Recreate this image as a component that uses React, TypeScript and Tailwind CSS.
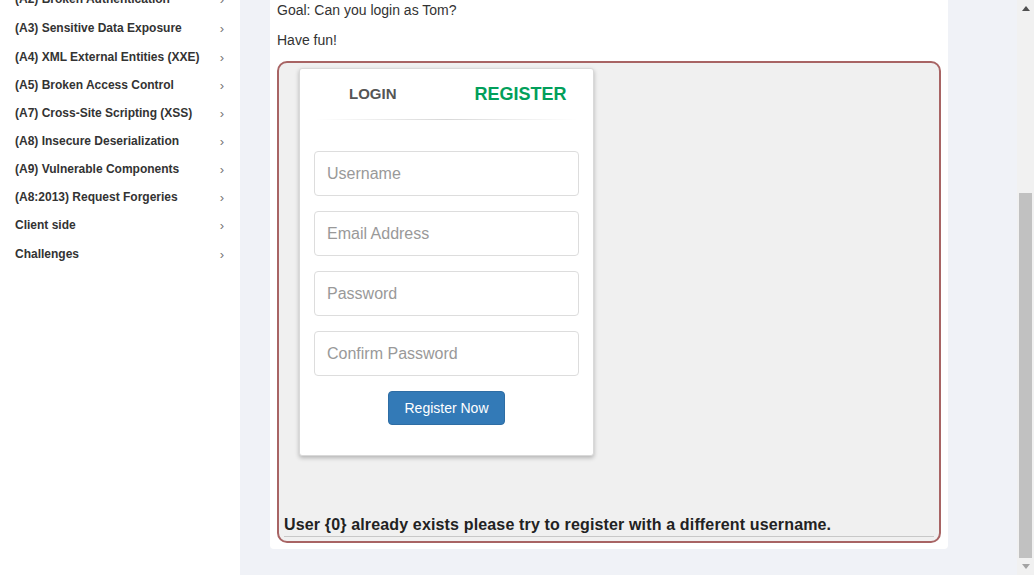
import React from 'react';

const menu = [
  { label: '(A2) Broken Authentication', h: 'h-[28px] -mt-[15px]' },
  { label: '(A3) Sensitive Data Exposure', h: 'h-[29px]' },
  { label: '(A4) XML External Entities (XXE)', h: 'h-[29px]' },
  { label: '(A5) Broken Access Control', h: 'h-[28px]' },
  { label: '(A7) Cross-Site Scripting (XSS)', h: 'h-[28px]' },
  { label: '(A8) Insecure Deserialization', h: 'h-[28px]' },
  { label: '(A9) Vulnerable Components', h: 'h-[28px]' },
  { label: '(A8:2013) Request Forgeries', h: 'h-[28px]' },
  { label: 'Client side', h: 'h-[28px]' },
  { label: 'Challenges', h: 'h-[29px]' },
];

function Field({ placeholder, type = 'text' }: { placeholder: string; type?: string }) {
  return (
    <input
      type={type}
      placeholder={placeholder}
      className="h-[45px] w-full rounded-[4px] border border-[#ddd] bg-white px-[12px] text-[16px] text-[#555] placeholder:text-[#999] outline-none"
    />
  );
}

function Scrollbar() {
  return (
    <div className="flex w-[17px] shrink-0 flex-col bg-[#f1f1f1]">
      <div className="flex h-[17px] items-center justify-center">
        <svg width="8" height="5" viewBox="0 0 8 5">
          <path d="M0 5L4 0L8 5Z" fill="#505050" />
        </svg>
      </div>
      <div className="h-[176px]" />
      <div className="mx-[2px] h-[365px] bg-[#c1c1c1]" />
      <div className="flex flex-1 items-center justify-center">
        <svg width="8" height="5" viewBox="0 0 8 5">
          <path d="M0 0L4 5L8 0Z" fill="#a3a3a3" />
        </svg>
      </div>
    </div>
  );
}

export default function App() {
  return (
    <div className="flex h-[575px] w-[1034px] overflow-hidden bg-[#f0f2f7] font-['Liberation_Sans',Arial,sans-serif] text-[#333]">
      {/* sidebar */}
      <aside className="w-[240px] shrink-0 bg-white">
        <ul className="pl-[15px] pr-[16px]">
          {menu.map(m => (
            <li key={m.label} className={`flex items-center justify-between ${m.h}`}>
              <span className="text-[12px] font-bold text-[#333]">{m.label}</span>
              <span className="mt-[2px] text-[13px] text-[#777]">›</span>
            </li>
          ))}
        </ul>
      </aside>

      {/* main */}
      <main className="flex-1 pl-[30px] pr-[69px]">
        <div className="-mt-[2px] rounded-b-[4px] bg-white px-[7px] pb-[6px] pt-[2px]">
          <p className="text-[14px] leading-[20px]">Goal: Can you login as Tom?</p>
          <p className="mt-[10px] text-[14px] leading-[20px]">Have fun!</p>

          <div className="mt-[11px] flex h-[482px] flex-col rounded-[10px] border-2 border-[#a86464] bg-[#f0f0f0]">
            <div className="ml-[20px] mt-[5px] flex h-[388px] w-[295px] flex-col rounded-[3px] border border-[#d9d9d9] bg-white shadow-[0_2px_4px_rgba(0,0,0,0.25)]">
              <div className="flex h-[50px] items-center px-[15px] pt-[1px]">
                <span className="ml-[34px] text-[15px] font-bold text-[#555]">LOGIN</span>
                <span className="ml-[78px] text-[18px] font-bold text-[#029f5b]">REGISTER</span>
              </div>
              <div className="mx-[15px] h-px bg-gradient-to-r from-transparent via-[#d8d8d8] to-transparent" />
              <form className="flex flex-col gap-[15px] px-[14px] pt-[31px]">
                <Field placeholder="Username" />
                <Field placeholder="Email Address" type="email" />
                <Field placeholder="Password" type="password" />
                <Field placeholder="Confirm Password" type="password" />
                <div className="flex justify-center">
                  <button
                    type="button"
                    className="h-[34px] w-[117px] rounded-[4px] border border-[#2e6da4] bg-[#337ab7] text-[14px] text-white"
                  >
                    Register Now
                  </button>
                </div>
              </form>
            </div>

            <div className="mt-auto px-[5px] pb-[4px]">
              <p className="text-[16px] font-bold leading-[18px] tracking-[0.15px] text-[#222]">
                User {'{0}'} already exists please try to register with a different username.
              </p>
              <div className="mt-[2px] h-px bg-[#c8c8c8]" />
            </div>
          </div>
        </div>
      </main>

      <Scrollbar />
    </div>
  );
}
